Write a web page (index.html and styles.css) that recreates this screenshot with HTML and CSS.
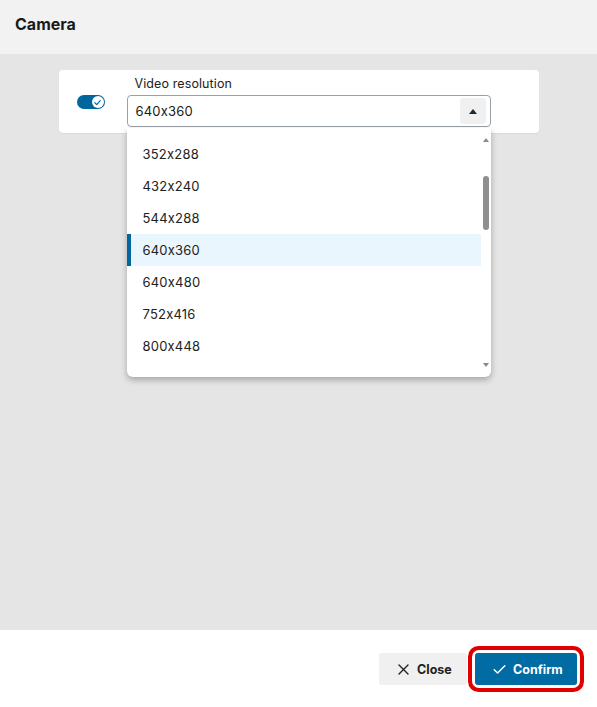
FILE: index.html
```html
<!DOCTYPE html>
<html>
<head>
<meta charset="utf-8">
<link rel="stylesheet" href="styles.css">
</head>
<body>
<div class="dialog">
  <header class="header"><h1 class="title">Camera</h1></header>
  <main class="content">
    <div class="card">
      <div class="toggle-wrap">
        <span class="toggle">
          <span class="knob">
            <svg width="9" height="9" viewBox="0 0 10 10"><path d="M2 5.2 L4.2 7.3 L8 3" fill="none" stroke="#00679e" stroke-width="1.3" stroke-linecap="round" stroke-linejoin="round"/></svg>
          </span>
        </span>
      </div>
      <div class="field">
        <label class="label">Video resolution</label>
        <div class="select">
          <span class="value">640x360</span>
          <span class="arrow-btn"><span class="tri-up"></span></span>
          <div class="listbox">
            <ul class="options">
              <li class="option">352x288</li>
              <li class="option">432x240</li>
              <li class="option">544x288</li>
              <li class="option selected">640x360</li>
              <li class="option">640x480</li>
              <li class="option">752x416</li>
              <li class="option">800x448</li>
            </ul>
            <div class="scrollbar">
              <span class="sb-up"></span>
              <span class="sb-thumb"></span>
              <span class="sb-down"></span>
            </div>
          </div>
        </div>
      </div>
    </div>
  </main>
  <footer class="footer">
    <button class="btn btn-close">
      <svg width="11" height="11" viewBox="0 0 11 11"><path d="M1 1 L10 10 M10 1 L1 10" stroke="#222" stroke-width="1.4" stroke-linecap="round"/></svg>
      <span>Close</span>
    </button>
    <span class="focus-ring">
      <button class="btn btn-confirm">
        <svg width="13" height="11" viewBox="0 0 13 11"><path d="M1.2 5.8 L4.6 9 L11.8 1.8" fill="none" stroke="#fff" stroke-width="1.5" stroke-linecap="round" stroke-linejoin="round"/></svg>
        <span>Confirm</span>
      </button>
    </span>
  </footer>
</div>
</body>
</html>
```
FILE: styles.css
```css
* { box-sizing: border-box; }
html, body { margin: 0; padding: 0; }
body {
  font-family: Inter, "Noto Sans", sans-serif;
  color: #222;
  width: 597px;
  height: 707px;
  overflow: hidden;
}
.dialog {
  display: flex;
  flex-direction: column;
  height: 707px;
}
.header {
  height: 54px;
  background: #f2f2f2;
  display: flex;
  align-items: center;
  padding: 0 15px 6px;
}
.title {
  margin: 0;
  font-size: 16px;
  font-weight: 700;
  color: #1a1a1a;
}
.content {
  flex: 1;
  background: #e5e5e5;
  padding-top: 16px;
  display: flex;
  justify-content: center;
  align-items: flex-start;
}
.card {
  width: 480px;
  background: #fff;
  border-radius: 4px;
  display: flex;
  padding: 6px 48px 6px 18px;
  box-shadow: 0 1px 1px rgba(0,0,0,0.06);
}
.toggle-wrap {
  width: 50px;
  padding-top: 19px;
}
.toggle {
  display: flex;
  align-items: center;
  justify-content: flex-end;
  width: 28px;
  height: 14px;
  border-radius: 7px;
  background: #00679e;
  padding: 1px;
}
.knob {
  width: 12px;
  height: 12px;
  border-radius: 50%;
  background: #fff;
  display: flex;
  align-items: center;
  justify-content: center;
}
.field {
  flex: 1;
  display: flex;
  flex-direction: column;
}
.label {
  font-size: 12.5px;
  line-height: 16px;
  padding-left: 8px;
  margin-bottom: 3px;
  color: #222;
  letter-spacing: 0.1px;
}
.select {
  position: relative;
  height: 32px;
  border: 1px solid #98a1a7;
  border-radius: 4px;
  display: flex;
  align-items: center;
  justify-content: space-between;
  padding: 0 4px 0 8px;
}
.value {
  font-size: 13px;
  color: #1a1a1a;
  letter-spacing: 0.2px;
}
.arrow-btn {
  width: 26px;
  height: 26px;
  background: #f0f0f0;
  border-radius: 3px;
  display: flex;
  align-items: center;
  justify-content: center;
}
.tri-up {
  width: 0;
  height: 0;
  border-left: 4.5px solid transparent;
  border-right: 4.5px solid transparent;
  border-bottom: 5px solid #1c2a36;
}
.listbox {
  position: absolute;
  top: 32px;
  left: -1px;
  right: -1px;
  height: 249px;
  background: #fff;
  border-radius: 0 0 6px 6px;
  box-shadow: 0 3px 6px rgba(0,0,0,0.28);
  overflow: hidden;
  display: flex;
  z-index: 5;
}
.options {
  list-style: none;
  margin: 0;
  padding: 10px 0 0;
  flex: 1;
}
.option {
  height: 32px;
  line-height: 32px;
  font-size: 13px;
  padding-left: 16px;
  color: #222;
  letter-spacing: 0.2px;
}
.option.selected {
  background: #eaf6fd;
  border-left: 4px solid #00679e;
  padding-left: 12px;
}
.scrollbar {
  width: 10px;
  display: flex;
  flex-direction: column;
  align-items: center;
  padding: 10px 0 10px;
}
.sb-up {
  width: 0;
  height: 0;
  border-left: 3.5px solid transparent;
  border-right: 3.5px solid transparent;
  border-bottom: 4px solid #8a8a8a;
}
.sb-thumb {
  width: 6px;
  height: 54px;
  border-radius: 3px;
  background: #8f8f8f;
  margin-top: 34px;
}
.sb-down {
  width: 0;
  height: 0;
  border-left: 3.5px solid transparent;
  border-right: 3.5px solid transparent;
  border-top: 4px solid #8a8a8a;
  margin-top: auto;
}
.footer {
  height: 77px;
  background: #fff;
  display: flex;
  justify-content: flex-end;
  align-items: center;
  gap: 8px;
  padding: 1px 20px 0 0;
}
.btn {
  height: 32px;
  border: none;
  border-radius: 3px;
  font-family: Inter, "Noto Sans", sans-serif;
  font-size: 12.5px;
  font-weight: 700;
  display: flex;
  align-items: center;
  gap: 8px;
  cursor: pointer;
}
.btn-close {
  width: 88px;
  background: #f0f0f0;
  color: #222;
  padding: 0 0 0 19px;
}
.focus-ring {
  display: flex;
  box-shadow: 0 0 0 3px #fff, 0 0 0 7px #e00000;
  border-radius: 4px;
}
.btn-confirm {
  width: 102px;
  background: #006ca3;
  color: #fff;
  padding: 0 0 0 18px;
  gap: 7px;
}
```
